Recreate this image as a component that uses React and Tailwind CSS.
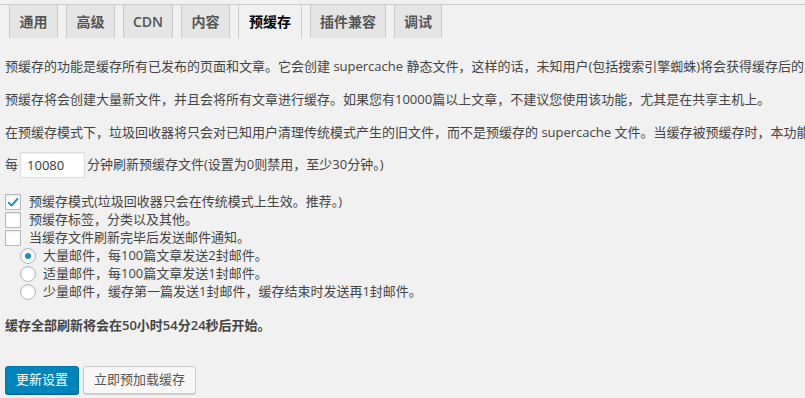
import React from 'react';

const tabs = [
  { label: '通用', w: 'w-[49px]' },
  { label: '高级', w: 'w-[49px]' },
  { label: 'CDN', w: 'w-[50px]' },
  { label: '内容', w: 'w-[49px]' },
  { label: '预缓存', w: 'w-[64px]', active: true },
  { label: '插件兼容', w: 'w-[76px]' },
  { label: '调试', w: 'w-[48px]' },
];

const Checkbox = ({ checked }) => (
  <span className="w-4 h-4 shrink-0 bg-white border border-[#b4b9be] shadow-[inset_0_1px_2px_rgba(0,0,0,0.1)] flex items-center justify-center">
    {checked && (
      <svg viewBox="0 0 16 16" className="w-[15px] h-[15px]">
        <path d="M3 8.2 L6.3 11.5 L13 4" fill="none" stroke="#1e8cbe" strokeWidth="2.2" strokeLinecap="round" strokeLinejoin="round" />
      </svg>
    )}
  </span>
);

const Radio = ({ checked }) => (
  <span className="w-4 h-4 shrink-0 rounded-full bg-white border border-[#b4b9be] shadow-[inset_0_1px_2px_rgba(0,0,0,0.1)] flex items-center justify-center">
    {checked && <span className="w-[6px] h-[6px] rounded-full bg-[#1e8cbe]" />}
  </span>
);

const App = () => {
  return (
    <div className="w-full h-[398px] overflow-hidden bg-[#f1f1f1] text-[#444] text-[13px] font-['Open_Sans','Noto_Sans_CJK_SC',sans-serif]">
      {/* Tabs */}
      <div className="pt-[4px]">
        <div className="h-px bg-[#ccc]" />
        <div className="flex gap-2 pl-[9px] h-[33px]">
          {tabs.map((t) => (
            <div
              key={t.label}
              className={`${t.w} flex items-center justify-center border-x border-[#ccc] text-[14px] font-semibold leading-none ${
                t.active ? 'bg-[#f1f1f1] text-black' : 'bg-[#e5e5e5] text-[#555]'
              }`}
            >
              {t.label}
            </div>
          ))}
        </div>
      </div>

      <div className="pl-[5px] whitespace-nowrap">
        <p className="mt-[18px] leading-[20px]">
          预缓存的功能是缓存所有已发布的页面和文章。它会创建 supercache 静态文件，这样的话，未知用户(包括搜索引擎蜘蛛)将会获得缓存后的页面。如果不使用预缓存，仅当页面被访问时才会进行缓存。
        </p>
        <p className="mt-[13px] leading-[20px]">
          预缓存将会创建大量新文件，并且会将所有文章进行缓存。如果您有10000篇以上文章，不建议您使用该功能，尤其是在共享主机上。
        </p>
        <p className="mt-[13px] leading-[20px]">
          在预缓存模式下，垃圾回收器将只会对已知用户清理传统模式产生的旧文件，而不是预缓存的 supercache 文件。当缓存被预缓存时，本功能将会被禁用。
        </p>

        {/* Interval */}
        <div className="mt-[10px] flex items-center h-[26px]">
          <span>每</span>
          <input
            type="text"
            defaultValue="10080"
            className="ml-[2px] w-[65px] h-[26px] bg-white border border-[#ddd] shadow-[inset_0_1px_2px_rgba(0,0,0,0.07)] px-[6px] text-[13px] text-[#32373c] outline-none"
          />
          <span className="ml-[2px]">分钟刷新预缓存文件(设置为0则禁用，至少30分钟。)</span>
        </div>

        {/* Options */}
        <ul className="mt-[15px]">
          <li className="h-[18px] flex items-center gap-2">
            <Checkbox checked />
            <span>预缓存模式(垃圾回收器只会在传统模式上生效。推荐。)</span>
          </li>
          <li className="h-[18px] flex items-center gap-2">
            <Checkbox />
            <span>预缓存标签，分类以及其他。</span>
          </li>
          <li className="h-[18px] flex items-center gap-2">
            <Checkbox />
            <span>当缓存文件刷新完毕后发送邮件通知。</span>
          </li>
          <li className="h-[18px] flex items-center gap-[7px] pl-[15px]">
            <Radio checked />
            <span>大量邮件，每100篇文章发送2封邮件。</span>
          </li>
          <li className="h-[18px] flex items-center gap-[7px] pl-[15px]">
            <Radio />
            <span>适量邮件，每100篇文章发送1封邮件。</span>
          </li>
          <li className="h-[18px] flex items-center gap-[7px] pl-[15px]">
            <Radio />
            <span>少量邮件，缓存第一篇发送1封邮件，缓存结束时发送再1封邮件。</span>
          </li>
        </ul>

        <p className="mt-[14px] leading-[20px] font-semibold">缓存全部刷新将会在50小时54分24秒后开始。</p>

        {/* Buttons */}
        <div className="mt-[31px] flex gap-[4px]">
          <button className="w-[74px] h-[28px] bg-[#0085ba] border border-[#0073aa] rounded-[3px] text-white text-[13px] shadow-[0_1px_0_#006799]">
            更新设置
          </button>
          <button className="w-[113px] h-[28px] bg-[#f7f7f7] border border-[#ccc] rounded-[3px] text-[#555] text-[13px] shadow-[0_1px_0_#ccc]">
            立即预加载缓存
          </button>
        </div>
      </div>
    </div>
  );
};

export default App;
